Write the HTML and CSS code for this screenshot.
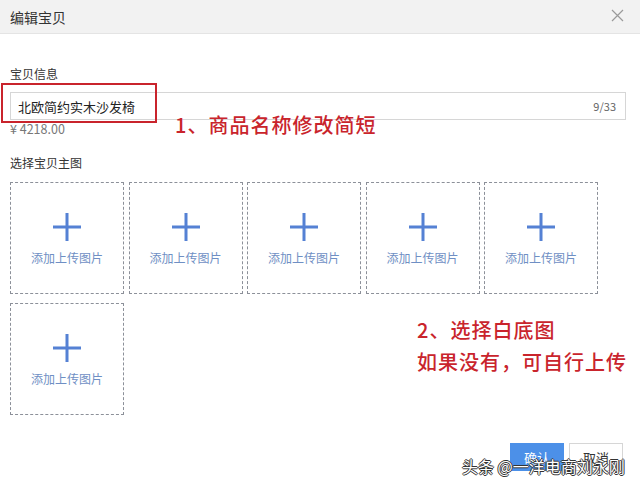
FILE: index.html
```html
<!DOCTYPE html>
<html lang="zh-CN">
<head>
  <meta charset="UTF-8">
  <title>编辑宝贝</title>
  <link rel="stylesheet" href="styles.css">
</head>
<body>

<div class="dialog">
  <div class="dialog-header">
    <span class="dialog-title">编辑宝贝</span>
    <svg class="close" width="13" height="13" viewBox="0 0 13 13">
      <path d="M1 1 L12 12 M12 1 L1 12" stroke="#9a9a9a" stroke-width="1.2" fill="none"/>
    </svg>
  </div>

  <div class="dialog-body">
    <div class="label">宝贝信息</div>
    <div class="input">
      <span class="input-text">北欧简约实木沙发椅</span>
      <span class="counter">9/33</span>
    </div>
    <div class="price">¥ 4218.00</div>

    <div class="label label-pics">选择宝贝主图</div>
    <div class="pics">
      <div class="pic">
        <svg width="28" height="28" viewBox="0 0 28 28"><path d="M14 0 V28 M0 14 H28" stroke="#5581d4" stroke-width="3"/></svg>
        <span>添加上传图片</span>
      </div>
      <div class="pic">
        <svg width="28" height="28" viewBox="0 0 28 28"><path d="M14 0 V28 M0 14 H28" stroke="#5581d4" stroke-width="3"/></svg>
        <span>添加上传图片</span>
      </div>
      <div class="pic">
        <svg width="28" height="28" viewBox="0 0 28 28"><path d="M14 0 V28 M0 14 H28" stroke="#5581d4" stroke-width="3"/></svg>
        <span>添加上传图片</span>
      </div>
      <div class="pic">
        <svg width="28" height="28" viewBox="0 0 28 28"><path d="M14 0 V28 M0 14 H28" stroke="#5581d4" stroke-width="3"/></svg>
        <span>添加上传图片</span>
      </div>
      <div class="pic">
        <svg width="28" height="28" viewBox="0 0 28 28"><path d="M14 0 V28 M0 14 H28" stroke="#5581d4" stroke-width="3"/></svg>
        <span>添加上传图片</span>
      </div>
      <div class="pic">
        <svg width="28" height="28" viewBox="0 0 28 28"><path d="M14 0 V28 M0 14 H28" stroke="#5581d4" stroke-width="3"/></svg>
        <span>添加上传图片</span>
      </div>
    </div>

    <div class="footer">
      <button class="btn btn-primary">确认</button>
      <button class="btn">取消</button>
    </div>
  </div>

  <!-- annotations drawn over the screenshot -->
  <div class="mark-box"></div>
  <div class="note note-1">1、商品名称修改简短</div>
  <div class="note note-2">2、选择白底图<br>如果没有，可自行上传</div>
  <div class="watermark">头条 @一洋电商刘永刚</div>
</div>

</body>
</html>
```

FILE: styles.css
```css
body {
  margin: 0;
  font-family: "Noto Sans CJK SC", "Noto Sans", sans-serif;
  background: #fff;
  color: #333;
}

.dialog {
  position: relative;
  width: 640px;
  height: 489px;
  overflow: hidden;
}

.dialog-header {
  height: 33px;
  background: #f2f2f2;
  border-bottom: 1px solid #e4e4e4;
  display: flex;
  align-items: center;
  justify-content: space-between;
  padding: 0 16px 0 10px;
}

.dialog-title {
  font-size: 14px;
  color: #333;
}

.close {
  margin-bottom: 3px;
}

.dialog-body {
  padding: 32px 14px 0 10px;
}

.label {
  font-size: 12px;
  line-height: 16px;
  color: #333;
}

.input {
  margin-top: 10px;
  height: 26px;
  border: 1px solid #d6d6d6;
  display: flex;
  align-items: center;
  justify-content: space-between;
  padding: 0 9px 0 7px;
}

.input-text {
  font-size: 13px;
  color: #222;
}

.counter {
  font-size: 11px;
  color: #666;
}

.price {
  margin-top: 1px;
  font-size: 12.5px;
  line-height: 16px;
  color: #777;
}

.label-pics {
  margin-top: 18px;
}

.pics {
  margin-top: 11px;
  display: grid;
  grid-template-columns: repeat(5, 114px);
  column-gap: 4.5px;
  row-gap: 9px;
}

.pic {
  border: 1px dashed #8c9099;
  display: flex;
  flex-direction: column;
  align-items: center;
  padding-top: 30px;
  height: 80px;
}

.pic span {
  margin-top: 9px;
  font-size: 12px;
  line-height: 16px;
  color: #6f8fc4;
}

.footer {
  margin-top: 28px;
  display: flex;
  justify-content: flex-end;
  gap: 5px;
  padding-right: 3px;
}

.btn {
  width: 54px;
  height: 28px;
  font-family: inherit;
  font-size: 13px;
  border: 1px solid #d6d6d6;
  background: #fff;
  color: #333;
  padding: 0;
}

.btn-primary {
  background: #4c90e8;
  border-color: #4c90e8;
  color: #fff;
}

.mark-box {
  position: absolute;
  left: 1px;
  top: 83px;
  width: 152px;
  height: 36px;
  border: 2px solid #c9242c;
}

.note {
  position: absolute;
  font-size: 20px;
  font-weight: 500;
  letter-spacing: 1px;
  color: #c9242c;
}

.note-1 {
  left: 175px;
  top: 112px;
  line-height: 26px;
}

.note-2 {
  left: 417px;
  top: 314px;
  line-height: 32px;
}

.watermark {
  position: absolute;
  left: 462px;
  top: 455px;
  font-size: 16px;
  line-height: 22px;
  color: #fff;
  text-shadow: 1px 0 0 #333, -1px 0 0 #333, 0 1px 0 #333, 0 -1px 0 #333;
}
```
